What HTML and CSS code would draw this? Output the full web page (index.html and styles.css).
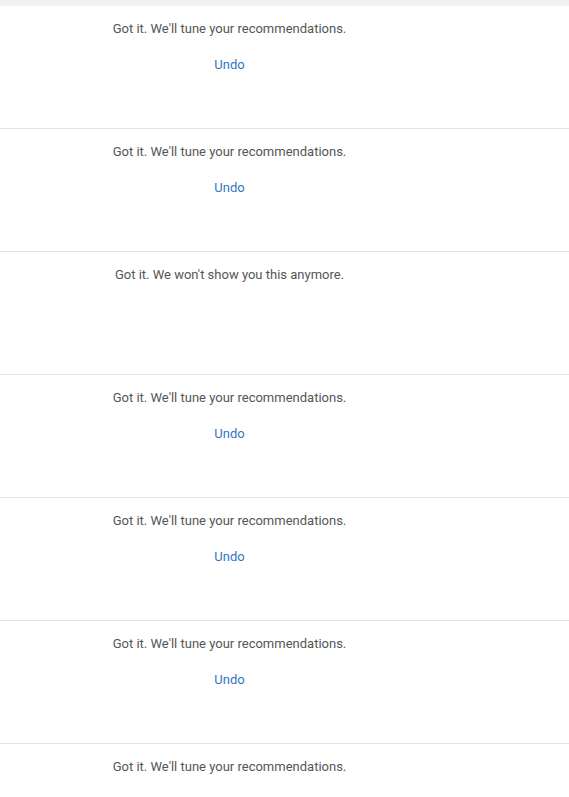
FILE: index.html
```html
<!DOCTYPE html>
<html>
<head>
<meta charset="utf-8">
<link rel="stylesheet" href="styles.css">
</head>
<body>
<div class="topbar"></div>
<div class="list">
  <div class="item"><div class="msg">Got it. We'll tune your recommendations.</div><a class="undo">Undo</a></div>
  <div class="item"><div class="msg">Got it. We'll tune your recommendations.</div><a class="undo">Undo</a></div>
  <div class="item"><div class="msg">Got it. We won't show you this anymore.</div></div>
  <div class="item"><div class="msg">Got it. We'll tune your recommendations.</div><a class="undo">Undo</a></div>
  <div class="item"><div class="msg">Got it. We'll tune your recommendations.</div><a class="undo">Undo</a></div>
  <div class="item"><div class="msg">Got it. We'll tune your recommendations.</div><a class="undo">Undo</a></div>
  <div class="item last"><div class="msg">Got it. We'll tune your recommendations.</div></div>
</div>
</body>
</html>
```
FILE: styles.css
```css
html, body {
  margin: 0;
  padding: 0;
  background: #fff;
  overflow: hidden;
}
body {
  font-family: Roboto, "Liberation Sans", sans-serif;
  font-size: 13px;
  line-height: 16px;
}
.topbar {
  height: 6px;
  background: #f1f1f1;
}
.item {
  box-sizing: border-box;
  height: 123px;
  border-bottom: 1px solid #e2e2e2;
  padding: 15px 110px 0 0;
  display: flex;
  flex-direction: column;
  align-items: center;
  text-align: center;
}
.item.last {
  height: 53px;
  border-bottom: none;
}
.msg {
  color: #555555;
}
.undo {
  margin-top: 20px;
  color: #2f76c1;
  text-decoration: none;
  cursor: pointer;
}
```
